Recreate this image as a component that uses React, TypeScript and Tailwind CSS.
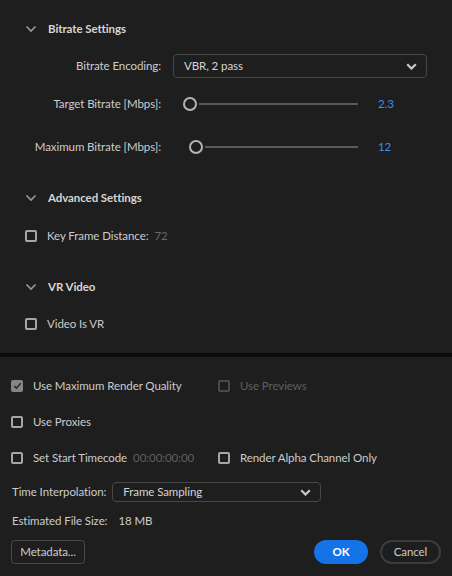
import React from "react";

const Chevron = () => (
  <svg width="12" height="8" viewBox="0 0 12 8" className="shrink-0">
    <polyline points="1.5,1.5 6,6 10.5,1.5" fill="none" stroke="#9a9a9a" strokeWidth="1.6" />
  </svg>
);

const DropChevron = () => (
  <svg width="11" height="7" viewBox="0 0 11 7" className="shrink-0">
    <polyline points="1.2,1.2 5.5,5.5 9.8,1.2" fill="none" stroke="#c8c8c8" strokeWidth="2.2" />
  </svg>
);

const Box = ({ checked = false, disabled = false }: { checked?: boolean; disabled?: boolean }) =>
  checked ? (
    <div className="w-[12px] h-[12px] rounded-[2px] bg-[#858585] flex items-center justify-center shrink-0">
      <svg width="9" height="8" viewBox="0 0 9 8">
        <polyline points="1.3,4.2 3.4,6.2 7.7,1.3" fill="none" stroke="#2a2a2a" strokeWidth="1.6" />
      </svg>
    </div>
  ) : (
    <div
      className={
        "w-[12px] h-[12px] rounded-[2px] border-2 shrink-0 " +
        (disabled ? "border-[#4a4a4a]" : "border-[#a6a6a6]")
      }
    />
  );

const Header = ({ title, mt }: { title: string; mt: string }) => (
  <div className={"flex items-center h-[20px] pl-[25px] " + mt}>
    <Chevron />
    <span className="ml-[11px] font-bold text-[#d6d6d6]">{title}</span>
  </div>
);

const SliderRow = ({ label, value, knobLeft, mt }: { label: string; value: string; knobLeft: number; mt: string }) => (
  <div className={"flex items-center h-[24px] " + mt}>
    <div className="w-[161px] text-right text-[#cccccc]">{label}</div>
    <div className="w-[197px] flex items-center">
      <div style={{ width: knobLeft }} className="shrink-0" />
      <div className="w-[14px] h-[14px] rounded-full border-2 border-[#b4b4b4] shrink-0" />
      <div className="flex-1 h-[2px] bg-[#5a5a5a] ml-[2px]" />
    </div>
    <div className="ml-[20px] text-[#3a8ff0]">{value}</div>
  </div>
);

export default function App() {
  return (
    <div
      className="w-[452px] h-[576px] bg-[#1e1e1e] text-[11.5px] tracking-[-0.08px] leading-none overflow-hidden flex flex-col"
      style={{ fontFamily: "Lato, 'Noto Sans', sans-serif" }}
    >
      <Header title="Bitrate Settings" mt="mt-[19px]" />

      <div className="flex items-center h-[24px] mt-[15px]">
        <div className="w-[161px] text-right text-[#cccccc]">Bitrate Encoding:</div>
        <div className="ml-[12px] w-[254px] h-[24px] rounded-[4px] border border-[#484848] flex items-center justify-between pl-[10px] pr-[9px]">
          <span className="text-[#d4d4d4]">VBR, 2 pass</span>
          <DropChevron />
        </div>
      </div>

      <SliderRow label="Target Bitrate [Mbps]:" value="2.3" knobLeft={22} mt="mt-[14px]" />
      <SliderRow label="Maximum Bitrate [Mbps]:" value="12" knobLeft={28} mt="mt-[19px]" />

      <Header title="Advanced Settings" mt="mt-[29px]" />

      <div className="flex items-center h-[20px] pl-[25px] mt-[18px]">
        <Box />
        <span className="ml-[10px] text-[#cccccc]">Key Frame Distance:</span>
        <span className="ml-[6px] text-[#6a6a6a]">72</span>
      </div>

      <Header title="VR Video" mt="mt-[31px]" />

      <div className="flex items-center h-[20px] pl-[25px] mt-[17px]">
        <Box />
        <span className="ml-[10px] text-[#cccccc]">Video Is VR</span>
      </div>

      <div className="h-[4px] bg-[#0c0c0c] mt-[19px] shrink-0" />

      <div className="flex items-center h-[20px] pl-[11px] mt-[19px]">
        <div className="w-[207px] flex items-center">
          <Box checked />
          <span className="ml-[10px] text-[#cccccc]">Use Maximum Render Quality</span>
        </div>
        <Box disabled />
        <span className="ml-[10px] text-[#5e5e5e]">Use Previews</span>
      </div>

      <div className="flex items-center h-[20px] pl-[11px] mt-[16px]">
        <Box />
        <span className="ml-[10px] text-[#cccccc]">Use Proxies</span>
      </div>

      <div className="flex items-center h-[20px] pl-[11px] mt-[16px]">
        <div className="w-[207px] flex items-center">
          <Box />
          <span className="ml-[10px] text-[#cccccc]">Set Start Timecode</span>
          <span className="ml-[6px] text-[#5e5e5e]">00:00:00:00</span>
        </div>
        <Box />
        <span className="ml-[10px] text-[#cccccc]">Render Alpha Channel Only</span>
      </div>

      <div className="flex items-center h-[20px] pl-[12px] mt-[14px]">
        <span className="text-[#cccccc]">Time Interpolation:</span>
        <div className="ml-[6px] w-[209px] h-[20px] rounded-[4px] border border-[#484848] flex items-center justify-between pl-[10px] pr-[9px]">
          <span className="text-[#d4d4d4]">Frame Sampling</span>
          <DropChevron />
        </div>
      </div>

      <div className="flex items-center h-[20px] pl-[12px] mt-[9px]">
        <span className="text-[#cccccc]">Estimated File Size:</span>
        <span className="ml-[11px] text-[#cccccc]">18 MB</span>
      </div>

      <div className="flex items-center h-[24px] pl-[11px] pr-[11px] mt-[9px]">
        <div className="w-[74px] h-[24px] rounded-[4px] border border-[#4a4a4a] flex items-center justify-center text-[#cccccc]">
          Metadata...
        </div>
        <div className="flex-1" />
        <div className="w-[54px] h-[24px] rounded-full bg-[#1473e6] flex items-center justify-center text-white font-bold">
          OK
        </div>
        <div className="ml-[12px] w-[61px] h-[24px] rounded-full border-2 border-[#3c3c3c] flex items-center justify-center text-[#cccccc]">
          Cancel
        </div>
      </div>
    </div>
  );
}
